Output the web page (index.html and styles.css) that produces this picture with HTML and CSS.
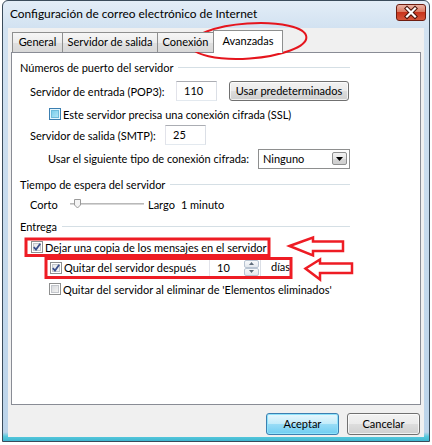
FILE: index.html
```html
<!DOCTYPE html>
<html lang="es">
<head>
<meta charset="utf-8">
<title>Configuración de correo electrónico de Internet</title>
<link rel="stylesheet" href="styles.css">
</head>
<body>
<div class="window">
  <div class="titlebar">
    <span class="title">Configuración de correo electrónico de Internet</span>
    <div class="close">
      <svg width="28" height="15" viewBox="0 0 28 15">
        <path d="M10 3.5 L18 11.5 M18 3.5 L10 11.5" stroke="#4a1208" stroke-width="4.2" stroke-linecap="square"/>
        <path d="M10 3.5 L18 11.5 M18 3.5 L10 11.5" stroke="#fff" stroke-width="2.2" stroke-linecap="square"/>
      </svg>
    </div>
  </div>
  <div class="client">
    <div class="tabs">
      <div class="tab t-gen">General</div>
      <div class="tab t-srv">Servidor de salida</div>
      <div class="tab t-con">Conexión</div>
      <div class="tab t-adv active">Avanzadas</div>
    </div>
    <div class="panel">
      <div class="group g1"><span>Números de puerto del servidor</span></div>
      <div class="row r-pop">
        <span class="lbl w-pop">Servidor de entrada (POP3):</span>
        <div class="input in-pop">110</div>
        <div class="btn btn-def">Usar predeterminados</div>
      </div>
      <div class="row r-ssl">
        <span class="cb hot"></span>
        <span class="cblbl">Este servidor precisa una conexión cifrada (SSL)</span>
      </div>
      <div class="row r-smtp">
        <span class="lbl w-smtp">Servidor de salida (SMTP):</span>
        <div class="input in-smtp">25</div>
      </div>
      <div class="row r-enc">
        <span class="lbl w-enc">Usar el siguiente tipo de conexión cifrada:</span>
        <div class="select">
          <span>Ninguno</span>
          <span class="dd"><svg width="7" height="4" viewBox="0 0 7 4"><path d="M0 0 H7 L3.5 4 Z" fill="#000"/></svg></span>
        </div>
      </div>
      <div class="group g2"><span>Tiempo de espera del servidor</span></div>
      <div class="row r-slider">
        <span class="lbl w-corto">Corto</span>
        <svg class="slider" width="76" height="12" viewBox="0 0 76 12">
          <rect x="0" y="5" width="74" height="2" fill="#d6d6d6"/>
          <rect x="0" y="5" width="74" height="1" fill="#b9b9b9"/>
          <path d="M4.5 1.5 H10.5 V7 L7.5 10 L4.5 7 Z" fill="#f4f4f4" stroke="#9a9a9a"/>
        </svg>
        <span class="largo">Largo</span>
        <span class="minuto">1 minuto</span>
      </div>
      <div class="group g3"><span>Entrega</span></div>
      <div class="row r-c1">
        <span class="cb checked"><svg width="8" height="8" viewBox="0 0 8 8"><path d="M0.8 4.2 L3 6.6 L7.2 0.8" fill="none" stroke="#3a4f8c" stroke-width="1.8"/></svg></span>
        <span class="cblbl">Dejar una copia de los mensajes en el servidor</span>
      </div>
      <div class="row r-c2">
        <span class="cb checked"><svg width="8" height="8" viewBox="0 0 8 8"><path d="M0.8 4.2 L3 6.6 L7.2 0.8" fill="none" stroke="#3a4f8c" stroke-width="1.8"/></svg></span>
        <span class="cblbl w-quitar">Quitar del servidor después</span>
        <div class="input in-days">
          <span>10</span>
          <span class="spin">
            <span class="sp"><svg width="5" height="3" viewBox="0 0 5 3"><path d="M0 3 H5 L2.5 0 Z" fill="#5d6b7a"/></svg></span>
            <span class="sp"><svg width="5" height="3" viewBox="0 0 5 3"><path d="M0 0 H5 L2.5 3 Z" fill="#5d6b7a"/></svg></span>
          </span>
        </div>
        <span class="dias">días</span>
      </div>
      <div class="row r-c3">
        <span class="cb"></span>
        <span class="cblbl">Quitar del servidor al eliminar de 'Elementos eliminados'</span>
      </div>
    </div>
    <div class="buttons">
      <div class="btn btn-ok">Aceptar</div>
      <div class="btn btn-cancel">Cancelar</div>
    </div>
  </div>
</div>
<svg class="annot" width="432" height="445" viewBox="0 0 432 445">
  <ellipse cx="248.5" cy="41" rx="58" ry="17.5" transform="rotate(-4 248.5 41)" fill="none" stroke="#e5151d" stroke-width="2"/>
  <rect x="26" y="239" width="243" height="16.5" fill="none" stroke="#ee1c24" stroke-width="3"/>
  <rect x="46" y="258.5" width="245" height="19" fill="none" stroke="#ee1c24" stroke-width="3"/>
  <path d="M289.5 246 L313 237.5 L313 241.5 L343 241.5 L343 251 L313 251 L313 255.5 Z" fill="#fff" stroke="#ee1c24" stroke-width="2.5" stroke-linejoin="miter"/>
  <path d="M305.5 268.5 L320 259.5 L320 263.5 L352 263.5 L352 273 L320 273 L320 279.5 Z" fill="#fff" stroke="#ee1c24" stroke-width="2.5" stroke-linejoin="miter"/>
</svg>
</body>
</html>
```
FILE: styles.css
```css
* { box-sizing: border-box; }
body {
  margin: 0;
  background: #fff;
  font-family: "Lato", "Noto Sans", sans-serif;
  font-size: 11px;
  color: #000;
}
.window {
  width: 428px;
  height: 442px;
  margin-left: 2px;
  border: 1px solid #3a4b5b;
  border-radius: 6px 6px 0 0;
  background: linear-gradient(to bottom, #e3edf7 0, #d2e2f1 27px, #c4d9ec 60%, #bcd4ea 98%, #55c8dc 99%, #3fb6d0 100%);
  display: flex;
  flex-direction: column;
}
.titlebar {
  height: 27px;
  display: flex;
  align-items: flex-start;
  justify-content: space-between;
  padding: 0 3px 0 7px;
}
.title {
  margin-top: 6px;
  line-height: 14px;
  font-size: 11.9px;
}
.close {
  width: 30px;
  height: 17px;
  margin-top: 3px;
  border: 1px solid #6e1d10;
  border-radius: 3px;
  background: linear-gradient(to bottom, #eab3a6 0, #dc7a62 45%, #c8341c 50%, #d5553a 100%);
  display: flex;
  align-items: center;
  justify-content: center;
}
.client {
  flex: 1;
  margin: 0 5px 4px 5px;
  background: #f0f0f0;
  padding: 2px 3px 0 3px;
  display: flex;
  flex-direction: column;
}
.tabs {
  display: flex;
  height: 22px;
  padding-left: 1px;
  position: relative;
  z-index: 1;
}
.tab {
  height: 20px;
  margin-top: 2px;
  margin-right: -1px;
  border: 1px solid #8e8f8f;
  border-bottom: none;
  background: linear-gradient(to bottom, #f6f6f6 0, #ececec 50%, #e0e0e0 51%, #d8d8d8 100%);
  text-align: center;
  line-height: 18px;
  white-space: nowrap;
}
.t-gen { width: 51px; }
.t-srv { width: 96px; }
.t-con { width: 57px; }
.t-adv { width: 70px; }
.tab.active {
  height: 23px;
  margin-top: 0;
  background: #fff;
  line-height: 20px;
}
.panel {
  height: 353px;
  border: 1px solid #898c95;
  background: #fff;
  display: flex;
  flex-direction: column;
}
.group {
  display: flex;
  align-items: center;
  height: 15px;
  margin-left: 8px;
  width: 330px;
  white-space: nowrap;
}
.group::after {
  content: "";
  flex: 1;
  height: 1px;
  background: #d5dfe5;
  margin-left: 5px;
}
.g1 { margin-top: 7px; }
.g2 { margin-top: 8px; }
.g3 { margin-top: 7px; }
.row {
  display: flex;
  align-items: center;
  white-space: nowrap;
}
.lbl { padding-left: 18px; }
.r-pop { margin-top: 5px; height: 22px; }
.w-pop { width: 164px; }
.input {
  height: 20px;
  border: 1px solid #abadb3;
  border-color: #abadb3 #dbdfe6 #e3e9ef #e2e3ea;
  background: #fff;
  padding-left: 7px;
  line-height: 18px;
}
.in-pop { width: 41px; }
.btn {
  border: 1px solid #707070;
  border-radius: 3px;
  background: linear-gradient(to bottom, #f2f2f2 0, #ebebeb 48%, #dddddd 52%, #cfcfcf 100%);
  box-shadow: inset 0 0 0 1px rgba(255,255,255,0.7);
  text-align: center;
}
.btn-def {
  width: 120px;
  height: 20px;
  line-height: 18px;
  margin-left: 12px;
}
.r-ssl { margin-top: 4px; height: 16px; padding-left: 37px; }
.cb {
  width: 12px;
  height: 12px;
  border: 1px solid #8e8f8f;
  background: linear-gradient(135deg, #d0d3d8 0, #eeeeee 70%, #f8f8f8 100%);
  box-shadow: inset 0 0 0 1px #fff, inset 0 0 0 2px #c3c6cb;
  display: flex;
  align-items: center;
  justify-content: center;
  flex: none;
}
.cb.hot {
  border-color: #3c7fb1;
  background: linear-gradient(135deg, #6cc9e8 0, #9ddcf2 60%, #c5ecf9 100%);
  box-shadow: inset 0 0 0 1px #e5f6fd, inset 0 0 0 2px #6dbbdb;
}
.cb.checked {
  background: linear-gradient(135deg, #e3e5e8 0, #f4f4f4 70%, #fafafa 100%);
}
.cblbl { margin-left: 2px; }
.r-smtp { margin-top: 2px; height: 22px; }
.w-smtp { width: 153px; }
.in-smtp { width: 41px; }
.r-enc { margin-top: 2px; height: 21px; }
.w-enc { width: 246px; padding-left: 36px; }
.select {
  width: 92px;
  height: 20px;
  border: 1px solid #8e8f8f;
  background: #fff;
  display: flex;
  align-items: center;
  justify-content: space-between;
  padding: 0 2px 0 4px;
}
.dd {
  width: 15px;
  height: 13px;
  border: 1px solid #8e8f8f;
  border-radius: 2px;
  background: linear-gradient(to bottom, #f2f2f2 0, #e6e6e6 50%, #d6d6d6 51%, #cfcfcf 100%);
  display: flex;
  align-items: center;
  justify-content: center;
}
.r-slider { margin-top: 4px; height: 16px; }
.w-corto { width: 58px; }
.slider { flex: none; }
.largo { margin-left: 2px; }
.minuto { margin-left: 6px; }
.r-c1 { margin-top: 5px; height: 16px; padding-left: 19px; }
.r-c2 { margin-top: 2px; height: 21px; padding-left: 38px; }
.w-quitar { width: 145px; }
.in-days {
  width: 52px;
  height: 20px;
  display: flex;
  justify-content: space-between;
  padding-right: 1px;
}
.spin {
  display: flex;
  flex-direction: column;
  width: 15px;
  padding: 1px 0;
}
.sp {
  flex: 1;
  border: 1px solid #b8c4d2;
  border-radius: 2px;
  background: linear-gradient(to bottom, #f7f9fb, #e3e8ee);
  display: flex;
  align-items: center;
  justify-content: center;
}
.dias { margin-left: 10px; margin-top: -3px; }
.r-c3 { margin-top: 3px; height: 16px; padding-left: 37px; }
.buttons {
  display: flex;
  justify-content: flex-end;
  gap: 8px;
  margin-top: 8px;
  padding-right: 1px;
}
.btn-ok, .btn-cancel {
  width: 73px;
  height: 22px;
  line-height: 20px;
}
.btn-ok {
  border-color: #3c7fb1;
  background: linear-gradient(to bottom, #e9f7fd 0, #c3ecfa 48%, #98dcf6 52%, #6fcdf2 100%);
  box-shadow: inset 0 0 0 1px #8fe3fb;
}
.annot {
  position: absolute;
  left: 0;
  top: 0;
  pointer-events: none;
}
```
